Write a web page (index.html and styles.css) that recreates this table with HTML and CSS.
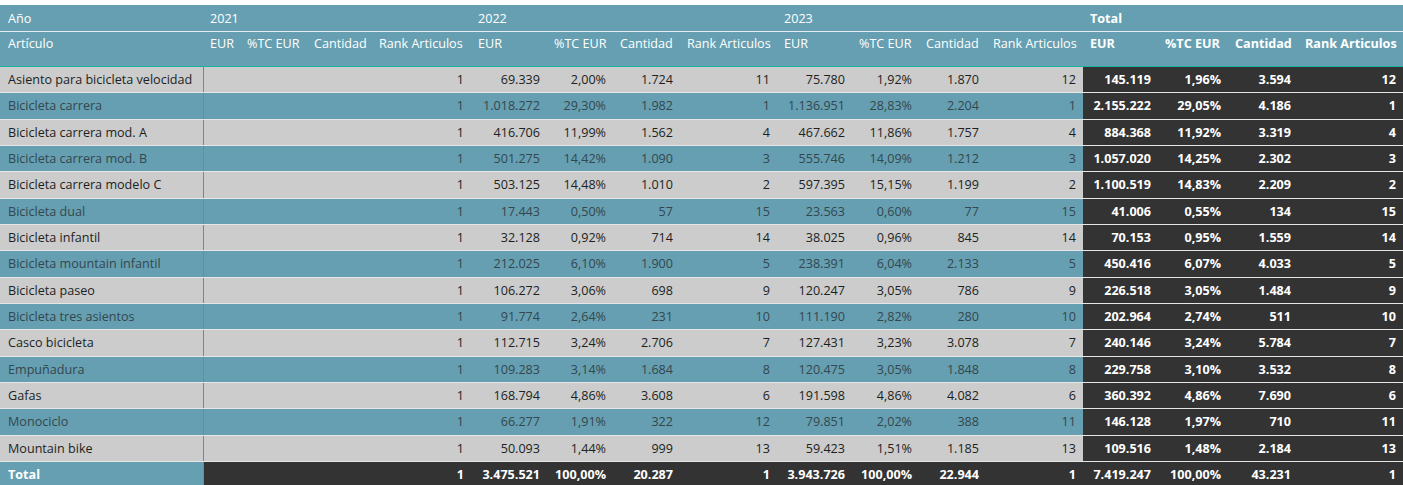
FILE: index.html
```html
<!DOCTYPE html>
<html lang="es">
<head>
<meta charset="utf-8">
<title>Matriz Artículos</title>
<link rel="stylesheet" href="styles.css">
</head>
<body>
<div class="pivot">
  <div class="row head years">
    <div class="c">Año</div>
    <div class="c span4">2021</div>
    <div class="c span4">2022</div>
    <div class="c span4">2023</div>
    <div class="c span4 b">Total</div>
  </div>
  <div class="row head cols">
    <div class="c">Artículo</div>
    <div class="c">EUR</div><div class="c">%TC EUR</div><div class="c">Cantidad</div><div class="c">Rank Articulos</div>
    <div class="c">EUR</div><div class="c">%TC EUR</div><div class="c">Cantidad</div><div class="c">Rank Articulos</div>
    <div class="c">EUR</div><div class="c">%TC EUR</div><div class="c">Cantidad</div><div class="c">Rank Articulos</div>
    <div class="c b">EUR</div><div class="c b">%TC EUR</div><div class="c b">Cantidad</div><div class="c b">Rank Articulos</div>
  </div>
  <div class="body">
    <div class="row data gray"><div class="c name">Asiento para bicicleta velocidad</div><div class="c n"></div><div class="c n"></div><div class="c n"></div><div class="c n">1</div><div class="c n">69.339</div><div class="c n">2,00%</div><div class="c n">1.724</div><div class="c n">11</div><div class="c n">75.780</div><div class="c n">1,92%</div><div class="c n">1.870</div><div class="c n">12</div><div class="c n t">145.119</div><div class="c n t">1,96%</div><div class="c n t">3.594</div><div class="c n t">12</div></div>
    <div class="row data teal"><div class="c name">Bicicleta carrera</div><div class="c n"></div><div class="c n"></div><div class="c n"></div><div class="c n">1</div><div class="c n">1.018.272</div><div class="c n">29,30%</div><div class="c n">1.982</div><div class="c n">1</div><div class="c n">1.136.951</div><div class="c n">28,83%</div><div class="c n">2.204</div><div class="c n">1</div><div class="c n t">2.155.222</div><div class="c n t">29,05%</div><div class="c n t">4.186</div><div class="c n t">1</div></div>
    <div class="row data gray"><div class="c name">Bicicleta carrera mod. A</div><div class="c n"></div><div class="c n"></div><div class="c n"></div><div class="c n">1</div><div class="c n">416.706</div><div class="c n">11,99%</div><div class="c n">1.562</div><div class="c n">4</div><div class="c n">467.662</div><div class="c n">11,86%</div><div class="c n">1.757</div><div class="c n">4</div><div class="c n t">884.368</div><div class="c n t">11,92%</div><div class="c n t">3.319</div><div class="c n t">4</div></div>
    <div class="row data teal"><div class="c name">Bicicleta carrera mod. B</div><div class="c n"></div><div class="c n"></div><div class="c n"></div><div class="c n">1</div><div class="c n">501.275</div><div class="c n">14,42%</div><div class="c n">1.090</div><div class="c n">3</div><div class="c n">555.746</div><div class="c n">14,09%</div><div class="c n">1.212</div><div class="c n">3</div><div class="c n t">1.057.020</div><div class="c n t">14,25%</div><div class="c n t">2.302</div><div class="c n t">3</div></div>
    <div class="row data gray"><div class="c name">Bicicleta carrera modelo C</div><div class="c n"></div><div class="c n"></div><div class="c n"></div><div class="c n">1</div><div class="c n">503.125</div><div class="c n">14,48%</div><div class="c n">1.010</div><div class="c n">2</div><div class="c n">597.395</div><div class="c n">15,15%</div><div class="c n">1.199</div><div class="c n">2</div><div class="c n t">1.100.519</div><div class="c n t">14,83%</div><div class="c n t">2.209</div><div class="c n t">2</div></div>
    <div class="row data teal"><div class="c name">Bicicleta dual</div><div class="c n"></div><div class="c n"></div><div class="c n"></div><div class="c n">1</div><div class="c n">17.443</div><div class="c n">0,50%</div><div class="c n">57</div><div class="c n">15</div><div class="c n">23.563</div><div class="c n">0,60%</div><div class="c n">77</div><div class="c n">15</div><div class="c n t">41.006</div><div class="c n t">0,55%</div><div class="c n t">134</div><div class="c n t">15</div></div>
    <div class="row data gray"><div class="c name">Bicicleta infantil</div><div class="c n"></div><div class="c n"></div><div class="c n"></div><div class="c n">1</div><div class="c n">32.128</div><div class="c n">0,92%</div><div class="c n">714</div><div class="c n">14</div><div class="c n">38.025</div><div class="c n">0,96%</div><div class="c n">845</div><div class="c n">14</div><div class="c n t">70.153</div><div class="c n t">0,95%</div><div class="c n t">1.559</div><div class="c n t">14</div></div>
    <div class="row data teal"><div class="c name">Bicicleta mountain infantil</div><div class="c n"></div><div class="c n"></div><div class="c n"></div><div class="c n">1</div><div class="c n">212.025</div><div class="c n">6,10%</div><div class="c n">1.900</div><div class="c n">5</div><div class="c n">238.391</div><div class="c n">6,04%</div><div class="c n">2.133</div><div class="c n">5</div><div class="c n t">450.416</div><div class="c n t">6,07%</div><div class="c n t">4.033</div><div class="c n t">5</div></div>
    <div class="row data gray"><div class="c name">Bicicleta paseo</div><div class="c n"></div><div class="c n"></div><div class="c n"></div><div class="c n">1</div><div class="c n">106.272</div><div class="c n">3,06%</div><div class="c n">698</div><div class="c n">9</div><div class="c n">120.247</div><div class="c n">3,05%</div><div class="c n">786</div><div class="c n">9</div><div class="c n t">226.518</div><div class="c n t">3,05%</div><div class="c n t">1.484</div><div class="c n t">9</div></div>
    <div class="row data teal"><div class="c name">Bicicleta tres asientos</div><div class="c n"></div><div class="c n"></div><div class="c n"></div><div class="c n">1</div><div class="c n">91.774</div><div class="c n">2,64%</div><div class="c n">231</div><div class="c n">10</div><div class="c n">111.190</div><div class="c n">2,82%</div><div class="c n">280</div><div class="c n">10</div><div class="c n t">202.964</div><div class="c n t">2,74%</div><div class="c n t">511</div><div class="c n t">10</div></div>
    <div class="row data gray"><div class="c name">Casco bicicleta</div><div class="c n"></div><div class="c n"></div><div class="c n"></div><div class="c n">1</div><div class="c n">112.715</div><div class="c n">3,24%</div><div class="c n">2.706</div><div class="c n">7</div><div class="c n">127.431</div><div class="c n">3,23%</div><div class="c n">3.078</div><div class="c n">7</div><div class="c n t">240.146</div><div class="c n t">3,24%</div><div class="c n t">5.784</div><div class="c n t">7</div></div>
    <div class="row data teal"><div class="c name">Empuñadura</div><div class="c n"></div><div class="c n"></div><div class="c n"></div><div class="c n">1</div><div class="c n">109.283</div><div class="c n">3,14%</div><div class="c n">1.684</div><div class="c n">8</div><div class="c n">120.475</div><div class="c n">3,05%</div><div class="c n">1.848</div><div class="c n">8</div><div class="c n t">229.758</div><div class="c n t">3,10%</div><div class="c n t">3.532</div><div class="c n t">8</div></div>
    <div class="row data gray"><div class="c name">Gafas</div><div class="c n"></div><div class="c n"></div><div class="c n"></div><div class="c n">1</div><div class="c n">168.794</div><div class="c n">4,86%</div><div class="c n">3.608</div><div class="c n">6</div><div class="c n">191.598</div><div class="c n">4,86%</div><div class="c n">4.082</div><div class="c n">6</div><div class="c n t">360.392</div><div class="c n t">4,86%</div><div class="c n t">7.690</div><div class="c n t">6</div></div>
    <div class="row data teal"><div class="c name">Monociclo</div><div class="c n"></div><div class="c n"></div><div class="c n"></div><div class="c n">1</div><div class="c n">66.277</div><div class="c n">1,91%</div><div class="c n">322</div><div class="c n">12</div><div class="c n">79.851</div><div class="c n">2,02%</div><div class="c n">388</div><div class="c n">11</div><div class="c n t">146.128</div><div class="c n t">1,97%</div><div class="c n t">710</div><div class="c n t">11</div></div>
    <div class="row data gray"><div class="c name">Mountain bike</div><div class="c n"></div><div class="c n"></div><div class="c n"></div><div class="c n">1</div><div class="c n">50.093</div><div class="c n">1,44%</div><div class="c n">999</div><div class="c n">13</div><div class="c n">59.423</div><div class="c n">1,51%</div><div class="c n">1.185</div><div class="c n">13</div><div class="c n t">109.516</div><div class="c n t">1,48%</div><div class="c n t">2.184</div><div class="c n t">13</div></div>
    <div class="row data total"><div class="c name">Total</div><div class="c n"></div><div class="c n"></div><div class="c n"></div><div class="c n">1</div><div class="c n">3.475.521</div><div class="c n">100,00%</div><div class="c n">20.287</div><div class="c n">1</div><div class="c n">3.943.726</div><div class="c n">100,00%</div><div class="c n">22.944</div><div class="c n">1</div><div class="c n t">7.419.247</div><div class="c n t">100,00%</div><div class="c n t">43.231</div><div class="c n t">1</div></div>
  </div>
</div>
</body>
</html>
```
FILE: styles.css
```css
html, body {
  margin: 0;
  padding: 0;
  background: #ffffff;
}
body {
  padding-top: 5px;
  font-family: "Open Sans", "Segoe UI", sans-serif;
  font-size: 12.6px;
  overflow: hidden;
}
.pivot {
  width: 1403px;
}
.row {
  display: grid;
  grid-template-columns: 204px 36px 67px 65px 99px 76px 66px 67px 97px 75px 67px 67px 97px 75px 70px 70px 105px;
}
.c {
  padding: 0 7px;
  white-space: nowrap;
  overflow: hidden;
}
.span4 {
  grid-column: span 4;
}
.head {
  background: #669fb1;
  color: #ffffff;
}
.head .c:first-child {
  padding-left: 8px;
}
.cols .c:nth-child(2),
.years .c:nth-child(2) {
  padding-left: 6px;
}
.b {
  font-weight: 700;
}
.years {
  height: 27px;
  box-sizing: border-box;
  align-items: center;
  border-bottom: 1px solid #e2ecef;
}
.cols {
  height: 35px;
  padding-top: 3px;
  box-sizing: border-box;
  border-bottom: 1px solid #1ab3a3;
}
.data {
  height: 26.33px;
  box-sizing: border-box;
  align-items: center;
  border-bottom: 1px solid #e6e6e6;
}
.data .c {
  height: 100%;
  display: flex;
  align-items: center;
}
.data .name {
  padding-left: 8px;
  border-right: 1px solid #1ab3a3;
}
.data .n {
  justify-content: flex-end;
}
.gray {
  background: #cccccc;
  color: #201f1e;
}
.teal {
  background: #669fb1;
  color: #33474e;
}
.data .t {
  background: #333333;
  color: #ffffff;
  font-weight: 700;
}
.total {
  background: #333333;
  color: #ffffff;
  font-weight: 700;
}
.total .name {
  background: #669fb1;
}
```
